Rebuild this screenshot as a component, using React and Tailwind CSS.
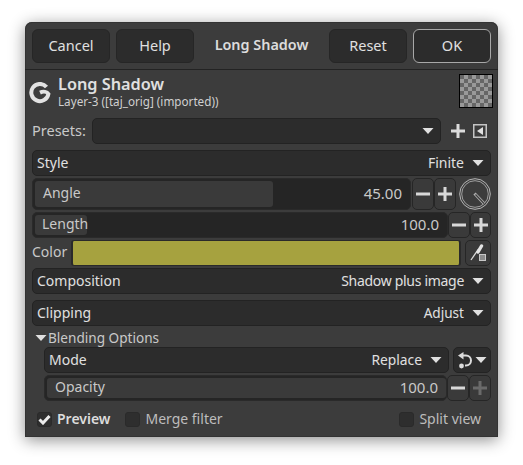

const font = { fontFamily: '"Noto Sans", sans-serif' };

const Tri = ({ className = "" }) => (
  <svg width="14" height="8" viewBox="0 0 14 8" className={"shrink-0 " + className}>
    <path d="M1.5 1 H12.5 L7 7 Z" fill="#e0e0e0" />
  </svg>
);

const Minus = ({ dim }) => (
  <svg width="14" height="14" viewBox="0 0 14 14"><path d="M0 7 H14" stroke={dim ? "#6a6a6a" : "#d8d8d8"} strokeWidth="3" /></svg>
);
const Plus = ({ dim }) => (
  <svg width="14" height="14" viewBox="0 0 14 14"><path d="M0 7 H14 M7 0 V14" stroke={dim ? "#6a6a6a" : "#d8d8d8"} strokeWidth="3" /></svg>
);

const Combo = ({ label, value, className = "", valueClass = "" }) => (
  <div className={"flex h-[26px] items-center justify-between rounded-[5px] border border-[#232323] bg-[#2c2c2c] pb-[1px] pl-[4px] pr-[5px] text-[14px] text-[#e0e0e0] " + className}>
    <span>{label}</span>
    <span className="flex items-center gap-[7px]">
      <span className={valueClass}>{value}</span>
      <Tri />
    </span>
  </div>
);

const StepBtn = ({ children, className = "" }) => (
  <div className={"flex items-center justify-center rounded-[5px] border border-[#262626] bg-[#3a3a3a] " + className}>
    {children}
  </div>
);

const Spin = ({ label, value, fill, className = "", h = "h-[26px]", labelPad = "pl-[8px]", valuePad = "pb-[2px]" }) => (
  <div className={"relative flex items-center justify-between rounded-[5px] border border-[#2a2a2a] bg-[#252525] pr-[8px] text-[#c9c9c9] " + h + " " + className}>
    <div className="absolute inset-y-[2px] left-[2px] rounded-[3px] bg-[#3a3a3a]" style={{ width: fill }} />
    <span className={"relative pb-[2px] text-[14px] " + labelPad}>{label}</span>
    <span className={"relative text-[15px] " + valuePad}>{value}</span>
  </div>
);

const Check = ({ checked, label, bold, dim }) => (
  <div className="flex items-center gap-[5px]">
    <div className="flex h-[15px] w-[15px] items-center justify-center rounded-[3px] border border-[#2a2a2a] bg-[#2e2e2e]">
      {checked && (
        <svg width="13" height="11" viewBox="0 0 13 11"><path d="M1.5 5.5 L5 9 L11.5 2" fill="none" stroke="#ececec" strokeWidth="3" /></svg>
      )}
    </div>
    <span className={"text-[14px] " + (bold ? "font-semibold text-[#dddddd]" : "") + (dim ? "text-[#bdbdbd]" : "")}>{label}</span>
  </div>
);

const HeadBtn = ({ children, ok }) => (
  <div className={"flex h-[34px] w-[78px] items-center justify-center rounded-[6px] border bg-[#2c2c2c] pb-[1px] text-[14.5px] text-[#e0e0e0] " + (ok ? "border-[#a8a8a8]" : "border-[#262626]")}>
    {children}
  </div>
);

export default function App() {
  return (
    <div className="h-[465px] w-[523px] bg-white pl-[25px] pt-[22px]" style={font}>
      <div className="h-[415px] w-[473px] rounded-t-[7px] bg-[#3c3c3c] text-[14px] leading-[20px] text-[#c9c9c9] shadow-[0_3px_16px_rgba(0,0,0,0.45),inset_0_0_0_1px_#333333]">
        {/* Header bar */}
        <div className="flex h-[48px] items-center gap-[6px] border-b border-[#232323] px-[7px]">
          <HeadBtn>Cancel</HeadBtn>
          <HeadBtn>Help</HeadBtn>
          <div className="flex-1 pb-[1px] text-center text-[14.4px] font-semibold text-[#dcdcdc]">Long Shadow</div>
          <HeadBtn>Reset</HeadBtn>
          <HeadBtn ok>OK</HeadBtn>
        </div>

        {/* Info */}
        <div className="flex h-[38px] items-center pl-[4px] pr-[5px] pt-[4px]">
          <svg width="22" height="22" viewBox="0 0 22 22" className="mr-[7px] mt-[3px] shrink-0">
            <path d="M17.5 5 A8.6 8.6 0 1 0 19.4 12 C18 9.8 14.5 9 11 10.6" fill="none" stroke="#e2e2e2" strokeWidth="4" />
          </svg>
          <div className="flex-1">
            <div className="text-[16.3px] font-semibold leading-[20px] text-[#e0e0e0]">Long Shadow</div>
            <div className="text-[11.7px] leading-[14px] text-[#d0d0d0]">Layer-3 ([taj_orig] (imported))</div>
          </div>
          <svg width="34" height="34" viewBox="0 0 34 34" className="shrink-0">
            <defs>
              <pattern id="chk" width="8" height="8" patternUnits="userSpaceOnUse" x="1" y="1">
                <rect width="4" height="4" fill="#666666" />
                <rect x="4" width="4" height="4" fill="#999999" />
                <rect y="4" width="4" height="4" fill="#999999" />
                <rect x="4" y="4" width="4" height="4" fill="#666666" />
              </pattern>
            </defs>
            <rect x="0.5" y="0.5" width="33" height="33" fill="url(#chk)" stroke="#000" />
          </svg>
        </div>

        {/* Controls */}
        <div className="mt-[10px] flex flex-col px-[7px]">
          {/* Presets */}
          <div className="flex h-[26px] items-center">
            <span className="w-[60px] pb-[2px] text-[14.5px]">Presets:</span>
            <div className="flex h-[26px] w-[349px] items-center justify-end rounded-[5px] border border-[#232323] bg-[#2c2c2c] pr-[5px]">
              <Tri />
            </div>
            <svg width="14" height="14" viewBox="0 0 14 14" className="ml-[10px]"><path d="M0 7 H14 M7 0 V14" stroke="#dcdcdc" strokeWidth="3" /></svg>
            <svg width="14" height="14" viewBox="0 0 14 14" className="ml-[8px]">
              <rect x="0.75" y="0.75" width="12.5" height="12.5" fill="none" stroke="#c4c4c4" strokeWidth="1.5" />
              <path d="M10 3 V11 L4 7 Z" fill="#e0e0e0" />
            </svg>
          </div>

          <Combo label="Style" value="Finite" className="mt-[6px]" />

          {/* Angle */}
          <div className="mt-[2px] flex h-[32px] items-center">
            <Spin label="Angle" value="45.00" fill={238} h="h-[32px]" labelPad="pl-[10px]" className="w-[379px]" />
            <StepBtn className="ml-[1px] h-[32px] w-[22px]"><Minus /></StepBtn>
            <StepBtn className="h-[32px] w-[22px]"><Plus /></StepBtn>
            <svg width="32" height="32" viewBox="0 0 32 32" className="ml-[3px]">
              <circle cx="16" cy="16" r="15.3" fill="none" stroke="#b5b5b5" strokeWidth="1" />
              <circle cx="16" cy="16" r="13.3" fill="none" stroke="#a0a0a0" strokeWidth="1" />
              <path d="M15.5 15.5 L25 25.5" stroke="#b0b0b0" strokeWidth="3" />
              <path d="M16.5 16.5 L25 25.5" stroke="#3c3c3c" strokeWidth="1.2" />
            </svg>
          </div>

          {/* Length */}
          <div className="mt-[2px] flex h-[26px] items-center">
            <Spin label="Length" value="100.0" fill={52} labelPad="pl-[9px]" className="w-[416px]" valuePad="pb-[3px]" />
            <StepBtn className="h-[26px] w-[22px]"><Minus /></StepBtn>
            <StepBtn className="h-[26px] w-[21px]"><Plus /></StepBtn>
          </div>

          {/* Color */}
          <div className="mt-[2px] flex h-[26px] items-center">
            <span className="w-[39px] shrink-0 pb-[2px]">Color</span>
            <div className="h-[26px] w-[390px] rounded-[3px] border-y border-l-2 border-r-2 border-[#2a2a2a] bg-[#a6a23f]" />
            <div className="ml-[4px] flex h-[26px] w-[26px] items-center justify-center rounded-[5px] border border-[#262626] bg-[#3a3a3a]">
              <svg width="18" height="18" viewBox="0 0 18 18">
                <path d="M2 16 L9.5 5" stroke="#dcdcdc" strokeWidth="1.3" />
                <path d="M9 8 L12.5 2" stroke="#e4e4e4" strokeWidth="3.4" strokeLinecap="round" />
                <rect x="10.5" y="10.5" width="6" height="6" fill="#8c8c8c" stroke="#c8c8c8" />
              </svg>
            </div>
          </div>

          <Combo label="Composition" value="Shadow plus image" valueClass="tracking-[-0.3px]" className="mt-[2px]" />
          <Combo label="Clipping" value="Adjust" valueClass="text-[13.6px]" className="mt-[6px]" />

          {/* Blending */}
          <div className="mt-[3px] flex h-[18px] items-center pl-[2px] text-[#c9c9c9]">
            <Tri className="mr-[1px]" />
            <span className="ml-[-1px] pb-[1px] text-[13.6px]">Blending Options</span>
          </div>
          <div className="ml-[12px] flex flex-col">
            <div className="flex items-center">
              <Combo label="Mode" value="Replace" valueClass="text-[13.8px]" className="w-[405px]" />
              <div className="ml-[4px] flex h-[26px] w-[38px] items-center justify-center gap-[1px] rounded-[5px] border border-[#232323] bg-[#2c2c2c]">
                <svg width="16" height="17" viewBox="0 0 16 17">
                  <path d="M5 3.5 H9 A5 5 0 0 1 9 13.5 H8" fill="none" stroke="#dcdcdc" strokeWidth="2" />
                  <path d="M6.5 0 V7.5 L1 3.5 Z" fill="#dcdcdc" />
                  <circle cx="4.5" cy="14" r="2.4" fill="#dcdcdc" />
                </svg>
                <Tri />
              </div>
            </div>
            <div className="mt-[2px] flex items-center">
              <Spin label="Opacity" value="100.0" fill={399} labelPad="pl-[10px]" className="w-[403px]" />
              <StepBtn className="h-[26px] w-[22px]"><Minus /></StepBtn>
              <StepBtn className="h-[26px] w-[22px]"><Plus dim /></StepBtn>
            </div>
          </div>

          {/* Footer */}
          <div className="mt-[8px] flex h-[20px] items-center pl-[5px] pr-[10px]">
            <Check checked label="Preview" bold />
            <div className="ml-[15px]"><Check label="Merge filter" dim /></div>
            <div className="ml-auto"><Check label="Split view" dim /></div>
          </div>
        </div>
      </div>
    </div>
  );
}
